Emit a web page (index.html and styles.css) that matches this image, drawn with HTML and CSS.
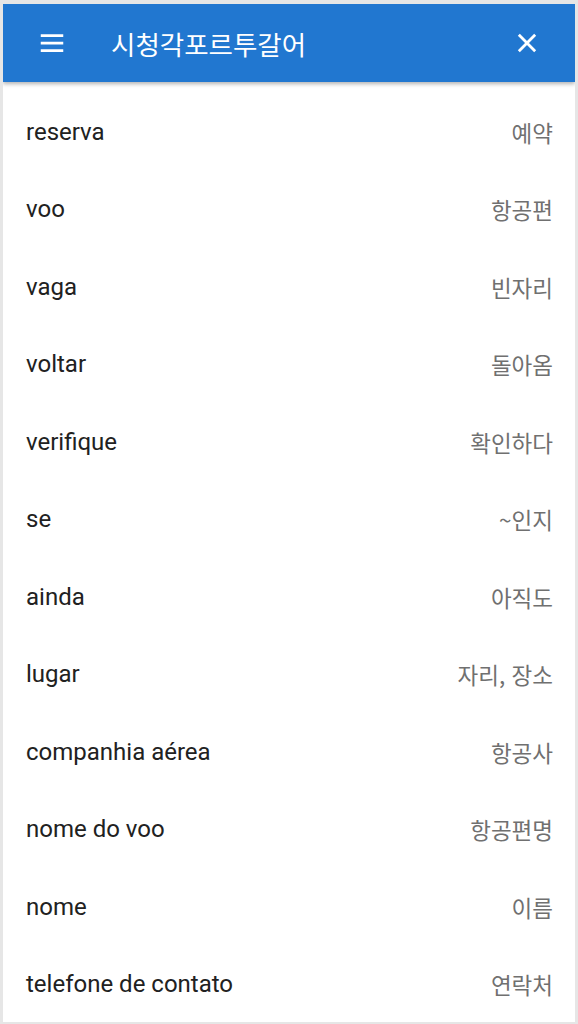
FILE: index.html
```html
<!DOCTYPE html>
<html lang="ko">
<head>
<meta charset="utf-8">
<link rel="stylesheet" href="styles.css">
</head>
<body>
<div class="frame">
  <header class="bar">
    <svg class="menu" width="24" height="24" viewBox="0 0 24 24"><path d="M3 6h18M3 12h18M3 18h18" stroke="#fff" stroke-width="2.2" fill="none"/></svg>
    <h1 class="title">시청각포르투갈어</h1>
    <svg class="close" width="24" height="24" viewBox="0 0 24 24"><path d="M5 5L19 19M19 5L5 19" stroke="#fff" stroke-width="2.4" fill="none"/></svg>
  </header>
  <ul class="list">
    <li class="row"><span class="pt">reserva</span><span class="ko">예약</span></li>
    <li class="row"><span class="pt">voo</span><span class="ko">항공편</span></li>
    <li class="row"><span class="pt">vaga</span><span class="ko">빈자리</span></li>
    <li class="row"><span class="pt">voltar</span><span class="ko">돌아옴</span></li>
    <li class="row"><span class="pt">verifique</span><span class="ko">확인하다</span></li>
    <li class="row"><span class="pt">se</span><span class="ko">~인지</span></li>
    <li class="row"><span class="pt">ainda</span><span class="ko">아직도</span></li>
    <li class="row"><span class="pt">lugar</span><span class="ko">자리, 장소</span></li>
    <li class="row"><span class="pt">companhia aérea</span><span class="ko">항공사</span></li>
    <li class="row"><span class="pt">nome do voo</span><span class="ko">항공편명</span></li>
    <li class="row"><span class="pt">nome</span><span class="ko">이름</span></li>
    <li class="row"><span class="pt">telefone de contato</span><span class="ko">연락처</span></li>
  </ul>
</div>
</body>
</html>
```
FILE: styles.css
```css
html, body {
  margin: 0;
  padding: 0;
  background: #e6e6e6;
  height: 1024px;
  overflow: hidden;
}
.frame {
  margin: 4px 3px 0 3px;
  background: #fff;
  height: 1018px;
  font-family: Roboto, "Noto Sans CJK KR", sans-serif;
  overflow: hidden;
}
.bar {
  height: 78px;
  background: #2177d0;
  display: flex;
  align-items: center;
  padding: 0 0 0 34px;
  box-shadow: 0 2px 4px rgba(0,0,0,0.3);
  position: relative;
}
.menu {
  width: 30px;
  height: 30px;
}
.title {
  margin: 0 0 0 44px;
  font-size: 26.5px;
  font-weight: 400;
  color: #fff;
  font-family: "Noto Sans CJK KR", sans-serif;
  flex: 1;
}
.close {
  width: 28px;
  height: 28px;
  margin-right: 34px;
}
.list {
  list-style: none;
  margin: 0;
  padding: 11px 0 0 0;
}
.row {
  height: 77.5px;
  display: flex;
  align-items: center;
  justify-content: space-between;
  padding: 0 22px 0 23px;
}
.pt {
  font-size: 24px;
  color: #212121;
}
.ko {
  font-size: 22.5px;
  color: #707070;
  font-family: "Noto Sans CJK KR", sans-serif;
}
```
